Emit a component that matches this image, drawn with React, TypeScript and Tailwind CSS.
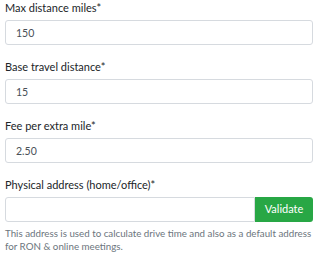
import React from 'react';

type Field = {
    label: string;
    value: string;
};

const fields: Field[] = [
    { label: 'Max distance miles*', value: '150' },
    { label: 'Base travel distance*', value: '15' },
    { label: 'Fee per extra mile*', value: '2.50' },
];

const App: React.FC = () => {
    return (
        <div className="w-[320px] h-[258px] bg-white pl-[5px] pr-[7px] text-[#212529] font-['Lato',sans-serif] overflow-hidden">
            {fields.map(f => (
                <div key={f.label} className="mb-[14px]">
                    <label className="block text-[11px] leading-[16px] mb-[4px]">{f.label}</label>
                    <input
                        type="text"
                        defaultValue={f.value}
                        className="block w-full h-[25px] px-[10px] text-[10.5px] text-[#495057] border border-[#d6dadf] rounded-[3px] outline-none font-['Lato',sans-serif]"
                    />
                </div>
            ))}
            <div>
                <label className="block text-[11px] leading-[16px] mb-[4px]">Physical address (home/office)*</label>
                <div className="flex h-[25px]">
                    <input
                        type="text"
                        className="flex-1 min-w-0 px-[10px] text-[10.5px] text-[#495057] border border-[#d6dadf] rounded-l-[3px] outline-none"
                    />
                    <button className="w-[58px] bg-[#28a745] text-white text-[11px] rounded-r-[3px] font-['Lato',sans-serif]">Validate</button>
                </div>
                <p className="mt-[5px] text-[9.75px] leading-[13px] text-[#6c757d]">
                    This address is used to calculate drive time and also as a default address for RON &amp; online meetings.
                </p>
            </div>
        </div>
    );
};

export default App;
